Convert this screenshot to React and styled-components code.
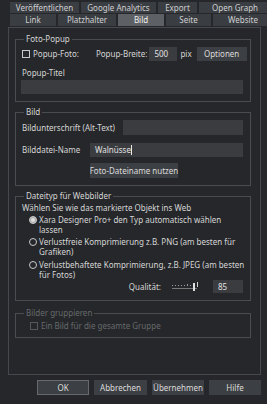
import React from "react";
import styled, { createGlobalStyle } from "styled-components";

const Global = createGlobalStyle`
  html, body { margin: 0; padding: 0; background: #25272a; }
  body { font-family: "Noto Sans", "DejaVu Sans", sans-serif; font-size: 8px; color: #d6d6d6; }
  #root { width: 267px; height: 404px; overflow: hidden; }
  * { box-sizing: border-box; }
`;

const Page = styled.div`
  width: 267px;
  height: 404px;
  padding-top: 2px;
  background: #25272a;
  display: flex;
  flex-direction: column;
`;

const TabRow = styled.div`
  display: flex;
  gap: 2px;
  padding-left: 10px;
  margin-bottom: 1px;
  white-space: nowrap;
`;

const Tab = styled.div`
  flex: 0 0 ${(p) => p.w}px;
  height: ${(p) => p.h}px;
  display: flex;
  align-items: center;
  justify-content: center;
  background: ${(p) => (p.active ? "#5d6064" : "#3a3d41")};
  color: ${(p) => (p.active ? "#f0f0f0" : "#cfd0d2")};
  font-size: 8px;
  line-height: 1;
`;

const Panel = styled.div`
  margin-left: 8px;
  width: 253px;
  height: 348px;
  border: 1px solid #45484c;
  padding: 6px 9px 0 6px;
  display: flex;
  flex-direction: column;
  gap: 5px;
`;

const Group = styled.fieldset`
  margin: 0;
  margin-top: ${(p) => p.mt || 0}px;
  border: 1px solid #494c50;
  padding: 3px 7px ${(p) => p.pb ?? 7}px 5px;
  display: flex;
  flex-direction: column;
  min-width: 0;
`;

const Legend = styled.legend`
  padding: 0 2px;
  margin-left: 3px;
  line-height: 10px;
  font-size: 8px;
  color: ${(p) => (p.disabled ? "#66696c" : "#d6d6d6")};
`;

const Row = styled.div`
  display: flex;
  align-items: center;
  margin-top: ${(p) => p.mt || 0}px;
  margin-left: ${(p) => p.ml || 0}px;
  justify-content: ${(p) => (p.end ? "flex-end" : "flex-start")};
  white-space: nowrap;
`;

const Text = styled.span`
  line-height: 10px;
  margin-left: ${(p) => p.ml || 0}px;
  flex: 0 0 ${(p) => (p.w ? `${p.w}px` : "auto")};
  color: ${(p) => (p.disabled ? "#66696c" : "#d6d6d6")};
`;

const Check = styled.span`
  display: inline-block;
  width: 8px;
  height: 8px;
  margin-left: ${(p) => p.ml || 0}px;
  margin-right: 3px;
  border: 1px solid ${(p) => (p.disabled ? "#55585b" : "#c9c9c9")};
  flex: 0 0 auto;
`;

const Input = styled.div`
  height: ${(p) => p.h || 15}px;
  flex: ${(p) => (p.w ? `0 0 ${p.w}px` : "1 1 auto")};
  margin-left: ${(p) => p.ml || 0}px;
  background: #3a3c40;
  display: flex;
  align-items: center;
  padding-left: 5px;
  color: #e2e2e2;
  line-height: 10px;
`;

const Caret = styled.span`
  display: inline-block;
  width: 1px;
  height: 10px;
  background: #e8e8e8;
  margin-left: 0.5px;
`;

const Button = styled.div`
  height: ${(p) => p.h || 15}px;
  flex: 0 0 ${(p) => p.w}px;
  width: ${(p) => p.w}px;
  margin-left: ${(p) => p.ml || 0}px;
  background: #3c3f43;
  border: 1px solid ${(p) => (p.primary ? "#66696d" : "#3c3f43")};
  display: flex;
  align-items: center;
  justify-content: center;
  color: #dcdcdc;
  white-space: nowrap;
  line-height: 10px;
`;

const Radio = styled.span`
  position: relative;
  display: inline-block;
  width: 8px;
  height: 8px;
  border-radius: 50%;
  border: 1px solid #c9c9c9;
  background: ${(p) => (p.checked ? "#a9a9a9" : "transparent")};
  margin-top: 1px;
  flex: 0 0 auto;
  &::after {
    content: "";
    display: ${(p) => (p.checked ? "block" : "none")};
    position: absolute;
    left: 1px;
    top: 1px;
    width: 4px;
    height: 4px;
    border-radius: 50%;
    background: #dedede;
  }
`;

const Option = styled.div`
  display: flex;
  align-items: flex-start;
  gap: 2px;
  margin-left: 8px;
  margin-top: ${(p) => p.mt || 0}px;
`;

const OptionText = styled.span`
  line-height: 9.5px;
  white-space: nowrap;
`;

const Footer = styled.div`
  display: flex;
  justify-content: flex-end;
  gap: 5px;
  padding: 5px 6px 0 0;
`;

function Slider() {
  const ticks = [0, 3, 6, 9, 12, 15, 18, 21];
  return (
    <svg width="28" height="12" viewBox="0 0 28 12" style={{ marginLeft: 10 }}>
      {ticks.map((x) => (
        <rect key={x} x={x + 1} y="4" width="1" height="1" fill="#9a9a9a" />
      ))}
      <rect x="16" y="3" width="1" height="2" fill="#9a9a9a" />
      <rect x="26" y="1" width="1" height="5" fill="#d0d0d0" />
      <rect x="1" y="7" width="25" height="1" fill="#7a7a7a" />
      <rect x="22" y="2" width="2" height="8" fill="#e0e0e0" />
    </svg>
  );
}

export default function App() {
  return (
    <Page>
      <Global />
      <TabRow>
        <Tab w={69} h={11}>Veröffentlichen</Tab>
        <Tab w={75} h={11}>Google Analytics</Tab>
        <Tab w={39} h={11}>Export</Tab>
        <Tab w={72} h={11}>Open Graph</Tab>
      </TabRow>
      <TabRow>
        <Tab w={46} h={12}>Link</Tab>
        <Tab w={58} h={12}>Platzhalter</Tab>
        <Tab w={46} h={12} active>Bild</Tab>
        <Tab w={45} h={12}>Seite</Tab>
        <Tab w={60} h={12}>Website</Tab>
      </TabRow>
      <Panel>
        <Group>
          <Legend>Foto-Popup</Legend>
          <Row>
            <Check ml={1} />
            <Text>Popup-Foto:</Text>
            <Text ml={17}>Popup-Breite:</Text>
            <Input w={28} h={14} ml={2}>500</Input>
            <Text ml={3}>pix</Text>
            <Button w={50} h={14} ml={5}>Optionen</Button>
          </Row>
          <Row mt={7} ml={1}>
            <Text>Popup-Titel</Text>
          </Row>
          <Row mt={2}>
            <Input h={14} />
          </Row>
        </Group>
        <Group>
          <Legend>Bild</Legend>
          <Row ml={1}>
            <Text>Bildunterschrift (Alt-Text)</Text>
            <Input ml={8} />
          </Row>
          <Row mt={8} ml={1}>
            <Text w={68}>Bilddatei-Name</Text>
            <Input h={14}>
              Walnüsse
              <Caret />
            </Input>
          </Row>
          <Row mt={6} ml={69}>
            <Button w={88}>Foto-Dateiname nutzen</Button>
          </Row>
        </Group>
        <Group>
          <Legend>Dateityp für Webbilder</Legend>
          <Row ml={1} mt={-1}>
            <Text>Wählen Sie wie das markierte Objekt ins Web</Text>
          </Row>
          <Option mt={2}>
            <Radio checked />
            <OptionText>
              Xara Designer Pro+ den Typ automatisch wählen
              <br />
              lassen
            </OptionText>
          </Option>
          <Option mt={3}>
            <Radio />
            <OptionText>
              Verlustfreie Komprimierung z.B. PNG (am besten für
              <br />
              Grafiken)
            </OptionText>
          </Option>
          <Option mt={4}>
            <Radio />
            <OptionText>
              Verlustbehaftete Komprimierung, z.B. JPEG (am besten
              <br />
              für Fotos)
            </OptionText>
          </Option>
          <Row mt={1} end>
            <Text>Qualität:</Text>
            <Slider />
            <Input w={30} h={13} ml={14}>85</Input>
          </Row>
        </Group>
        <Group pb={6} mt={2}>
          <Legend disabled>Bilder gruppieren</Legend>
          <Row ml={9}>
            <Check disabled />
            <Text disabled>Ein Bild für die gesamte Gruppe</Text>
          </Row>
        </Group>
      </Panel>
      <Footer>
        <Button w={52} primary>OK</Button>
        <Button w={53}>Abbrechen</Button>
        <Button w={52}>Übernehmen</Button>
        <Button w={52}>Hilfe</Button>
      </Footer>
    </Page>
  );
}
